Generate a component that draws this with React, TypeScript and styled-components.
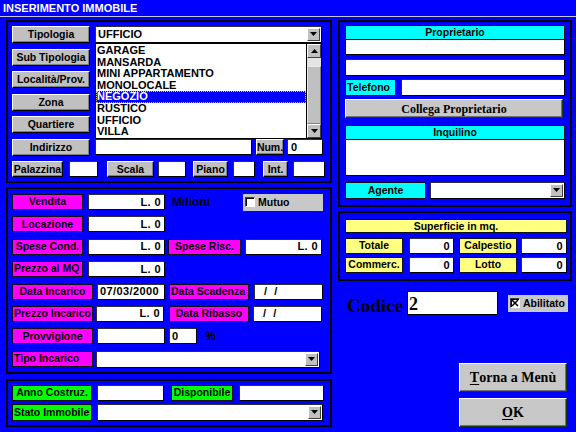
import React from "react";
import styled, { createGlobalStyle } from "styled-components";

const Global = createGlobalStyle`
  * { box-sizing: border-box; }
  html, body { margin: 0; padding: 0; background: #0000ff; }
  body { font-family: "Liberation Sans", Arial, sans-serif; }
`;

const SANS = `"Liberation Sans", Arial, sans-serif`;
const SERIF = `"Liberation Serif", "Times New Roman", serif`;

const Window = styled.div`
  width: 576px;
  height: 432px;
  background: #0000ff;
  overflow: hidden;
  display: flex;
  flex-direction: column;
`;

const TitleBar = styled.div`
  height: 17px;
  flex-shrink: 0;
  padding: 3px 0 0 3px;
  color: #fff;
  font: bold 11px/11px ${SANS};
  border-bottom: 1px solid #c8c8d8;
`;

const Body = styled.div`
  display: flex;
  gap: 6px;
  padding: 3px 0 0 6px;
`;

const Column = styled.div<{ $w: number }>`
  width: ${(p) => p.$w}px;
  display: flex;
  flex-direction: column;
`;

const Panel = styled.div<{ $h: number; $mt?: number; $pad: string; $gap?: number }>`
  height: ${(p) => p.$h}px;
  margin-top: ${(p) => p.$mt ?? 0}px;
  border: 2px solid #000;
  padding: ${(p) => p.$pad};
  display: flex;
  flex-direction: column;
  gap: ${(p) => p.$gap ?? 0}px;
`;

const Row = styled.div<{ $h?: number; $mt?: number }>`
  display: flex;
  align-items: center;
  height: ${(p) => p.$h ?? 16}px;
  margin-top: ${(p) => p.$mt ?? 0}px;
  flex-shrink: 0;
`;

const Btn = styled.div<{ $w: number; $h?: number; $ml?: number }>`
  width: ${(p) => p.$w}px;
  height: ${(p) => p.$h ?? 17}px;
  margin-left: ${(p) => p.$ml ?? 0}px;
  flex-shrink: 0;
  background: #c0c0c0;
  border: 1px solid;
  border-color: #ffffff #000000 #000000 #ffffff;
  box-shadow: inset -1px -1px #808080;
  font: bold 10.5px/1 ${SANS};
  color: #000;
  display: flex;
  align-items: center;
  justify-content: center;
  white-space: nowrap;
  overflow: hidden;
`;

const CmdButton = styled.div<{ $w: number; $h: number; $size: number; $mt?: number }>`
  width: ${(p) => p.$w}px;
  height: ${(p) => p.$h}px;
  margin-top: ${(p) => p.$mt ?? 0}px;
  flex-shrink: 0;
  background: #c8c8c8;
  border: 1px solid;
  border-color: #ffffff #1a3a1a #1a3a1a #ffffff;
  box-shadow: inset -1px -1px #707070;
  font: bold ${(p) => p.$size}px/1 ${SERIF};
  color: #000;
  display: flex;
  align-items: center;
  justify-content: center;
  white-space: nowrap;
`;

const Mnemonic = styled.span`
  text-decoration: underline;
  text-underline-offset: 2px;
`;

const Label = styled.div<{ $w: number; $bg: string; $h?: number; $ml?: number; $align?: string }>`
  width: ${(p) => p.$w}px;
  height: ${(p) => p.$h ?? 16}px;
  margin-left: ${(p) => p.$ml ?? 0}px;
  flex-shrink: 0;
  background: ${(p) => p.$bg};
  border: 1px solid #101010;
  font: bold 10.5px/1 ${SANS};
  color: #000;
  display: flex;
  align-items: center;
  justify-content: ${(p) => p.$align ?? "center"};
  padding: 0 0 1px ${(p) => (p.$align === "flex-start" ? 1 : 0)}px;
  white-space: nowrap;
  overflow: hidden;
`;

const Field = styled.div<{ $w: number; $h?: number; $ml?: number; $align?: string; $pl?: number }>`
  width: ${(p) => p.$w}px;
  height: ${(p) => p.$h ?? 16}px;
  margin-left: ${(p) => p.$ml ?? 0}px;
  flex-shrink: 0;
  background: #fff;
  border: 1px solid;
  border-color: #303030 #000 #000 #303030;
  font: bold 11px/1 ${SANS};
  letter-spacing: 0.4px;
  color: #000;
  display: flex;
  align-items: center;
  justify-content: ${(p) => p.$align ?? "flex-start"};
  padding: 0 3px 0 ${(p) => p.$pl ?? 3}px;
  white-space: pre;
  overflow: hidden;
`;

const Header = styled.div<{ $w: number; $bg: string; $h?: number }>`
  width: ${(p) => p.$w}px;
  height: ${(p) => p.$h ?? 15}px;
  flex-shrink: 0;
  background: ${(p) => p.$bg};
  border: 1px solid #101010;
  font: bold 10.5px/1 ${SANS};
  color: #000;
  display: flex;
  align-items: center;
  justify-content: center;
`;

const Memo = styled.div<{ $w: number; $h: number; $mt?: number; $open?: boolean }>`
  width: ${(p) => p.$w}px;
  height: ${(p) => p.$h}px;
  margin-top: ${(p) => p.$mt ?? 0}px;
  flex-shrink: 0;
  background: #fff;
  border: 1px solid #000;
  border-top: ${(p) => (p.$open ? "none" : "1px solid #303030")};
`;

const ComboWrap = styled.div<{ $w: number; $h?: number; $ml?: number }>`
  position: relative;
  width: ${(p) => p.$w}px;
  height: ${(p) => p.$h ?? 17}px;
  margin-left: ${(p) => p.$ml ?? 0}px;
  flex-shrink: 0;
`;

const ComboBox = styled.div`
  width: 100%;
  height: 100%;
  background: #fff;
  border: 1px solid;
  border-color: #303030 #000 #000 #303030;
  display: flex;
  align-items: center;
  padding: 0 1px 0 2px;
  font: bold 11px/1 ${SANS};
  color: #000;
`;

const ComboText = styled.span`
  flex: 1;
`;

const ArrowBtn = styled.div`
  width: 13px;
  height: calc(100% - 2px);
  background: #c0c0c0;
  border: 1px solid;
  border-color: #ffffff #404040 #404040 #ffffff;
  display: flex;
  align-items: center;
  justify-content: center;
  flex-shrink: 0;
`;

const DropList = styled.div`
  position: absolute;
  top: 17px;
  left: 0;
  width: 227px;
  height: 96px;
  z-index: 2;
  background: #fff;
  border: 1px solid #000;
  display: flex;
`;

const Items = styled.div`
  flex: 1;
  padding-top: 1px;
  overflow: hidden;
`;

const Item = styled.div<{ $sel?: boolean }>`
  height: 11.6px;
  padding-left: 1px;
  font: bold 11px/11.6px ${SANS};
  color: ${(p) => (p.$sel ? "#fff" : "#000")};
  background: ${(p) => (p.$sel ? "#0000ff" : "transparent")};
  outline: ${(p) => (p.$sel ? "1px dotted #d0d060" : "none")};
  outline-offset: -1px;
  white-space: nowrap;
`;

const ScrollBar = styled.div`
  width: 15px;
  border-left: 1px solid #000;
  display: flex;
  flex-direction: column;
  background: #e4e4e4;
`;

const ScrollArrow = styled.div`
  height: 14px;
  flex-shrink: 0;
  background: #c0c0c0;
  border: 1px solid;
  border-color: #ffffff #404040 #404040 #ffffff;
  display: flex;
  align-items: center;
  justify-content: center;
`;

const ScrollTrack = styled.div<{ $h: number }>`
  height: ${(p) => p.$h}px;
  flex-shrink: 0;
`;

const Thumb = styled.div`
  flex: 1;
  background: #c0c0c0;
  border: 1px solid;
  border-color: #e8e8e8 #808080 #808080 #e8e8e8;
`;

const Text = styled.div<{ $w?: number; $size?: number; $ml?: number }>`
  width: ${(p) => (p.$w ? `${p.$w}px` : "auto")};
  margin-left: ${(p) => p.$ml ?? 0}px;
  flex-shrink: 0;
  font: bold ${(p) => p.$size ?? 12}px/1 ${SANS};
  color: #000;
  white-space: nowrap;
`;

const CheckGroup = styled.div<{ $w: number; $h: number; $ml?: number }>`
  width: ${(p) => p.$w}px;
  height: ${(p) => p.$h}px;
  margin-left: ${(p) => p.$ml ?? 0}px;
  flex-shrink: 0;
  background: #c8c8c8;
  display: flex;
  align-items: center;
  gap: 3px;
  padding-left: 2px;
  font: bold 10.5px/1 ${SANS};
  color: #000;
`;

const CheckSquare = styled.div`
  width: 10px;
  height: 10px;
  background: #fff;
  border: 1px solid;
  border-color: #404040 #ffffff #ffffff #404040;
  box-shadow: inset 1px 1px #000;
  display: flex;
  align-items: center;
  justify-content: center;
`;

const CodiceRow = styled.div`
  display: flex;
  align-items: center;
  height: 24px;
  margin-top: 10px;
  padding-left: 9px;
`;

const CodiceLabel = styled.div`
  font: bold 19px/1 ${SERIF};
  color: #000;
  margin-top: 4px;
`;

const CodiceField = styled.div`
  width: 91px;
  height: 24px;
  margin-left: 4px;
  background: #fff;
  border: 1px solid #000;
  font: bold 18px/1 ${SERIF};
  color: #000;
  display: flex;
  align-items: center;
  padding: 2px 0 0 1px;
`;

const ButtonStack = styled.div`
  display: flex;
  flex-direction: column;
  align-items: flex-end;
  padding-right: 5px;
  margin-top: 48px;
`;

const DownTri = () => (
  <svg width="7" height="5" viewBox="0 0 7 5">
    <path d="M0 0h7L3.5 4z" fill="#000" />
  </svg>
);
const UpTri = () => (
  <svg width="7" height="5" viewBox="0 0 7 5">
    <path d="M0 4h7L3.5 0z" fill="#000" />
  </svg>
);

const Combo: React.FC<{ w: number; h?: number; ml?: number; text?: string; children?: React.ReactNode }> = ({
  w,
  h,
  ml,
  text,
  children,
}) => (
  <ComboWrap $w={w} $h={h} $ml={ml}>
    <ComboBox>
      <ComboText>{text}</ComboText>
      <ArrowBtn>
        <DownTri />
      </ArrowBtn>
    </ComboBox>
    {children}
  </ComboWrap>
);

const MAGENTA = "#ff00ff";
const CYAN = "#00ffff";
const YELLOW = "#ffff80";
const GREEN = "#00ff00";

const tipologie = [
  "GARAGE",
  "MANSARDA",
  "MINI APPARTAMENTO",
  "MONOLOCALE",
  "NEGOZIO",
  "RUSTICO",
  "UFFICIO",
  "VILLA",
];

const Panel1Grid = styled.div`
  display: grid;
  grid-template-rows: 17px 17px 17px 17px 17px 17px 16px;
  row-gap: 5.5px;
`;

export default function App() {
  return (
    <Window>
      <Global />
      <TitleBar>INSERIMENTO IMMOBILE</TitleBar>
      <Body>
        <Column $w={326}>
          <Panel $h={163} $pad="4px 0 0 4px">
            <Panel1Grid>
              <Row $h={17}>
                <Btn $w={78}>Tipologia</Btn>
                <Combo w={227} ml={5} text="UFFICIO">
                  <DropList>
                    <Items>
                      {tipologie.map((t) => (
                        <Item key={t} $sel={t === "NEGOZIO"}>
                          {t}
                        </Item>
                      ))}
                    </Items>
                    <ScrollBar>
                      <ScrollArrow>
                        <UpTri />
                      </ScrollArrow>
                      <ScrollTrack $h={8} />
                      <Thumb />
                      <ScrollArrow>
                        <DownTri />
                      </ScrollArrow>
                    </ScrollBar>
                  </DropList>
                </Combo>
              </Row>
              <Row $h={17}>
                <Btn $w={78}>Sub Tipologia</Btn>
              </Row>
              <Row $h={17}>
                <Btn $w={78}>Località/Prov.</Btn>
              </Row>
              <Row $h={17}>
                <Btn $w={78}>Zona</Btn>
              </Row>
              <Row $h={17}>
                <Btn $w={78}>Quartiere</Btn>
              </Row>
              <Row $h={17}>
                <Btn $w={78}>Indirizzo</Btn>
                <Field $w={157} $ml={5} />
                <Btn $w={28} $h={16} $ml={4}>
                  Num.
                </Btn>
                <Field $w={36} $ml={3}>
                  0
                </Field>
              </Row>
              <Row $h={16}>
                <Btn $w={51} $h={16}>
                  Palazzina
                </Btn>
                <Field $w={29} $ml={6} />
                <Btn $w={47} $h={16} $ml={9}>
                  Scala
                </Btn>
                <Field $w={28} $ml={4} />
                <Btn $w={35} $h={16} $ml={7}>
                  Piano
                </Btn>
                <Field $w={22} $ml={5} />
                <Btn $w={25} $h={16} $ml={8}>
                  Int.
                </Btn>
                <Field $w={32} $ml={5} />
              </Row>
            </Panel1Grid>
          </Panel>

          <Panel $h={187} $mt={4} $pad="5px 0 0 4px" $gap={6.4}>
            <Row>
              <Label $w={71} $bg={MAGENTA}>
                Vendita
              </Label>
              <Field $w={77} $ml={5} $align="flex-end">
                L. 0
              </Field>
              <Text $w={71} $ml={7}>
                Milioni
              </Text>
              <CheckGroup $w={80} $h={17}>
                <CheckSquare />
                Mutuo
              </CheckGroup>
            </Row>
            <Row>
              <Label $w={71} $bg={MAGENTA}>
                Locazione
              </Label>
              <Field $w={77} $ml={5} $align="flex-end">
                L. 0
              </Field>
            </Row>
            <Row>
              <Label $w={71} $bg={MAGENTA}>
                Spese Cond.
              </Label>
              <Field $w={77} $ml={5} $align="flex-end">
                L. 0
              </Field>
              <Label $w={73} $ml={3} $bg={MAGENTA}>
                Spese Risc.
              </Label>
              <Field $w={77} $ml={4} $align="flex-end">
                L. 0
              </Field>
            </Row>
            <Row>
              <Label $w={71} $bg={MAGENTA} $align="flex-start">
                Prezzo al MQ
              </Label>
              <Field $w={77} $ml={5} $align="flex-end">
                L. 0
              </Field>
            </Row>
            <Row>
              <Label $w={81} $bg={MAGENTA}>
                Data Incarico
              </Label>
              <Field $w={68} $ml={4} $pl={2}>
                07/03/2000
              </Field>
              <Label $w={80} $ml={4} $bg={MAGENTA} $align="flex-start">
                Data Scadenza
              </Label>
              <Field $w={69} $ml={5} $pl={9}>
                {"/  /"}
              </Field>
            </Row>
            <Row>
              <Label $w={81} $bg={MAGENTA} $align="flex-start">
                Prezzo Incarico
              </Label>
              <Field $w={68} $ml={3} $align="flex-end">
                L. 0
              </Field>
              <Label $w={80} $ml={5} $bg={MAGENTA}>
                Data Ribasso
              </Label>
              <Field $w={69} $ml={4} $pl={9}>
                {"/  /"}
              </Field>
            </Row>
            <Row>
              <Label $w={81} $bg={MAGENTA}>
                Provvigione
              </Label>
              <Field $w={68} $ml={4} />
              <Field $w={28} $ml={4} $pl={2}>
                0
              </Field>
              <Text $ml={8}>%</Text>
            </Row>
            <Row $h={17}>
              <Label $w={81} $bg={MAGENTA} $align="flex-start">
                Tipo Incarico
              </Label>
              <Combo w={224} ml={3} />
            </Row>
          </Panel>

          <Panel $h={48} $mt={5} $pad="3px 0 0 4px" $gap={3}>
            <Row $h={17}>
              <Label $w={80} $bg={GREEN}>
                Anno Costruz.
              </Label>
              <Field $w={67} $ml={5} />
              <Label $w={62} $ml={7} $bg={GREEN}>
                Disponibile
              </Label>
              <Field $w={85} $ml={6} />
            </Row>
            <Row $h={17}>
              <Label $w={80} $h={17} $bg={GREEN} $align="flex-start">
                Stato Immobile
              </Label>
              <Combo w={226} ml={5} />
            </Row>
          </Panel>
        </Column>

        <Column $w={234}>
          <Panel $h={187} $pad="3px 0 0 5px">
            <Header $w={220} $bg={CYAN}>
              Proprietario
            </Header>
            <Memo $w={220} $h={15} $open />
            <Memo $w={220} $h={17} $mt={4} />
            <Row $h={17} $mt={3}>
              <Label $w={51} $h={17} $bg={CYAN} $align="flex-start">
                Telefono
              </Label>
              <Field $w={164} $h={17} $ml={5} />
            </Row>
            <CmdButton $w={218} $h={19} $size={12} $mt={3}>
              Collega Proprietario
            </CmdButton>
            <Row $h={15} $mt={7}>
              <Header $w={220} $bg={CYAN}>
                Inquilino
              </Header>
            </Row>
            <Memo $w={220} $h={36} $open />
            <Row $h={17} $mt={6}>
              <Label $w={81} $h={17} $bg={CYAN}>
                Agente
              </Label>
              <Combo w={135} ml={4} />
            </Row>
          </Panel>

          <Panel $h={70} $mt={4} $pad="6px 0 0 5px">
            <Header $w={222} $h={14} $bg={YELLOW}>
              Superficie in mq.
            </Header>
            <Row $mt={5}>
              <Label $w={58} $bg={YELLOW}>
                Totale
              </Label>
              <Field $w={45} $ml={6} $align="flex-end">
                0
              </Field>
              <Label $w={58} $ml={5} $bg={YELLOW}>
                Calpestio
              </Label>
              <Field $w={46} $ml={4} $align="flex-end">
                0
              </Field>
            </Row>
            <Row $mt={3}>
              <Label $w={58} $bg={YELLOW}>
                Commerc.
              </Label>
              <Field $w={45} $ml={6} $align="flex-end">
                0
              </Field>
              <Label $w={58} $ml={5} $bg={YELLOW}>
                Lotto
              </Label>
              <Field $w={46} $ml={4} $align="flex-end">
                0
              </Field>
            </Row>
          </Panel>

          <CodiceRow>
            <CodiceLabel>Codice</CodiceLabel>
            <CodiceField>2</CodiceField>
            <CheckGroup $w={60} $h={17} $ml={10}>
              <CheckSquare>
                <svg width="8" height="8" viewBox="0 0 8 8">
                  <path d="M1 1L7 7M7 1L1 7" stroke="#000" strokeWidth="1.5" />
                </svg>
              </CheckSquare>
              Abilitato
            </CheckGroup>
          </CodiceRow>

          <ButtonStack>
            <CmdButton $w={108} $h={29} $size={14}>
              <Mnemonic>T</Mnemonic>orna a Menù
            </CmdButton>
            <CmdButton $w={108} $h={29} $size={14} $mt={6}>
              <Mnemonic>O</Mnemonic>K
            </CmdButton>
          </ButtonStack>
        </Column>
      </Body>
    </Window>
  );
}
